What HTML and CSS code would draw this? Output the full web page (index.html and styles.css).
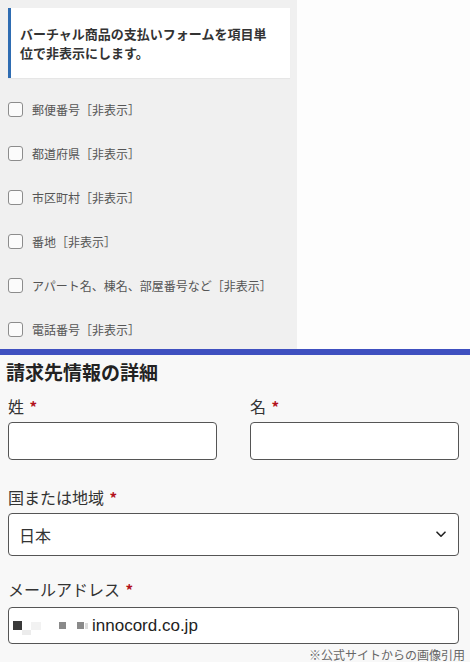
FILE: index.html
```html
<!DOCTYPE html>
<html lang="ja">
<head>
<meta charset="utf-8">
<title>請求先情報の詳細</title>
<link rel="stylesheet" href="styles.css">
</head>
<body>
<div class="top">
  <div class="panel">
    <div class="notice">バーチャル商品の支払いフォームを項目単位で非表示にします。</div>
    <ul class="checks">
      <li class="check"><input type="checkbox" class="box"><span>郵便番号［非表示］</span></li>
      <li class="check"><input type="checkbox" class="box"><span>都道府県［非表示］</span></li>
      <li class="check"><input type="checkbox" class="box"><span>市区町村［非表示］</span></li>
      <li class="check"><input type="checkbox" class="box"><span>番地［非表示］</span></li>
      <li class="check"><input type="checkbox" class="box"><span>アパート名、棟名、部屋番号など［非表示］</span></li>
      <li class="check"><input type="checkbox" class="box"><span>電話番号［非表示］</span></li>
    </ul>
  </div>
  <div class="blank"></div>
</div>
<div class="divider"></div>
<div class="form">
  <h2 class="title">請求先情報の詳細</h2>
  <div class="row">
    <div class="col">
      <div class="label">姓 <span class="req">*</span></div>
      <div class="field name"></div>
    </div>
    <div class="col">
      <div class="label">名 <span class="req">*</span></div>
      <div class="field name"></div>
    </div>
  </div>
  <div class="label country">国または地域 <span class="req">*</span></div>
  <div class="field select">
    <span class="sel-text">日本</span>
    <svg class="chev" width="10" height="7" viewBox="0 0 10 7"><path d="M1 1.2 L5 5.2 L9 1.2" fill="none" stroke="#222" stroke-width="1.6" stroke-linecap="round" stroke-linejoin="round"/></svg>
  </div>
  <div class="label email">メールアドレス <span class="req">*</span></div>
  <div class="field mail">
    <span class="px p1"></span><span class="px p2"></span><span class="px p3"></span><span class="px p4"></span><span class="px p5"></span><span class="px p6"></span><span class="mail-text">innocord.co.jp</span>
  </div>
  <div class="note">※公式サイトからの画像引用</div>
</div>
</body>
</html>
```
FILE: styles.css
```css
* { box-sizing: border-box; }
html, body { margin: 0; padding: 0; }
body {
  width: 470px;
  height: 662px;
  overflow: hidden;
  background: #f8f8f8;
  font-family: "Noto Sans CJK JP", "Noto Sans", sans-serif;
  color: #333;
}
.top {
  display: flex;
  height: 349px;
  background: #fdfdfd;
}
.panel {
  width: 297px;
  height: 349px;
  overflow: hidden;
  background: #f0f0f0;
  padding: 8px 7px 0 8px;
}
.notice {
  width: 282px;
  height: 70px;
  background: #fff;
  border-left: 3px solid #2e6cb2;
  padding: 0 14px 0 9px;
  display: flex;
  align-items: center;
  font-size: 13px;
  line-height: 19px;
  font-weight: 700;
  color: #333;
  box-shadow: 0 1px 1px rgba(0,0,0,0.04);
}
.checks {
  list-style: none;
  margin: 9px 0 0 0;
  padding: 0;
}
.check {
  height: 44px;
  display: flex;
  align-items: center;
  gap: 9px;
  font-size: 12px;
  color: #555;
}
.box {
  appearance: none;
  -webkit-appearance: none;
  margin: 0;
  width: 15px;
  height: 15px;
  border: 1px solid #8c8c8c;
  border-radius: 3px;
  background: #fbfbfb;
}
.blank { flex: 1; }
.divider {
  height: 6px;
  background: #3f50c0;
}
.form {
  padding: 0 11px 0 8px;
}
.title {
  margin: 4px 0 0 -2px;
  font-size: 19px;
  line-height: 26px;
  height: 26px;
  font-weight: 700;
  color: #222;
}
.row {
  display: flex;
  gap: 33px;
  margin-top: 10px;
}
.col { flex: 1; }
.label {
  font-size: 16px;
  line-height: 22px;
  height: 22px;
  color: #333;
}
.req {
  color: #b3121b;
  font-weight: 700;
  font-size: 15px;
  line-height: 1;
  margin-left: 2px;
}
.field {
  background: #fff;
  border: 1px solid #555;
  border-radius: 4px;
}
.name {
  height: 38px;
  margin-top: 5px;
}
.country { margin-top: 26px; }
.select {
  height: 43px;
  margin-top: 5px;
  display: flex;
  align-items: center;
  justify-content: space-between;
  padding: 0 12px 0 10px;
}
.sel-text {
  font-size: 16px;
  line-height: 22px;
  color: #333;
}
.chev { display: block; }
.email { margin-top: 22px; }
.mail {
  height: 37px;
  margin-top: 7px;
  display: flex;
  align-items: center;
  padding-left: 4px;
}
.px { display: block; flex: none; }
.p1 { width: 9px; height: 9px; background: #3a3a3a; }
.p2 { width: 9px; height: 5px; background: #ececec; margin-top: 13px; }
.p3 { width: 10px; height: 8px; background: #f2f2f2; }
.p4 { width: 7px; height: 7px; background: #8a8a8a; margin-left: 18px; }
.p5 { width: 7px; height: 7px; background: #8a8a8a; margin-left: 11px; }
.p6 { width: 3px; height: 6px; background: #dcdcdc; margin-left: 1px; }
.mail-text {
  margin-left: 4px;
  font-family: "Liberation Sans", Arial, sans-serif;
  font-size: 17px;
  line-height: 22px;
  color: #222;
}
.note {
  margin-top: 4px;
  margin-right: -6px;
  text-align: right;
  font-size: 12px;
  line-height: 14px;
  height: 14px;
  color: #666;
}
```
